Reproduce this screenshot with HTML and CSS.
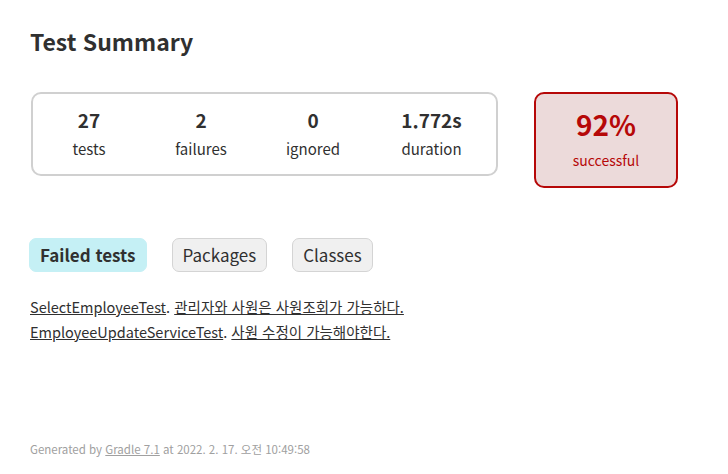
FILE: index.html
```html
<!DOCTYPE html>
<html lang="ko">

<head>
  <meta charset="UTF-8" />
  <title>Test results - Test Summary</title>
  <link rel="stylesheet" href="styles.css">
</head>

<body>
  <div id="content">
    <h1>Test Summary</h1>
    <div class="summary">
      <div class="summaryGroup">
        <div class="infoBox">
          <div class="counter">27</div>
          <p>tests</p>
        </div>
        <div class="infoBox">
          <div class="counter">2</div>
          <p>failures</p>
        </div>
        <div class="infoBox">
          <div class="counter">0</div>
          <p>ignored</p>
        </div>
        <div class="infoBox">
          <div class="counter">1.772s</div>
          <p>duration</p>
        </div>
      </div>
      <div id="successRate" class="infoBox failures">
        <div class="percent">92%</div>
        <p>successful</p>
      </div>
    </div>

    <ul class="tabLinks">
      <li class="selected"><a href="#">Failed tests</a></li>
      <li><a href="#">Packages</a></li>
      <li><a href="#">Classes</a></li>
    </ul>

    <ul class="linkList">
      <li><a href="#">SelectEmployeeTest</a>. <a href="#">관리자와 사원은 사원조회가 가능하다.</a></li>
      <li><a href="#">EmployeeUpdateServiceTest</a>. <a href="#">사원 수정이 가능해야한다.</a></li>
    </ul>

    <div id="footer">
      Generated by <a href="#">Gradle 7.1</a> at 2022. 2. 17. 오전 10:49:58
    </div>
  </div>
</body>

</html>
```

FILE: styles.css
```css
body {
  margin: 0;
  padding: 0;
  font-family: "Noto Sans CJK KR", "Noto Sans", sans-serif;
  font-size: 16px;
}

body, a, a:visited {
  color: #303030;
}

#content {
  padding: 20px 30px 20px 30px;
}

#content h1 {
  font-size: 23px;
  margin: 0 0 30px 0;
  line-height: 42px;
}

.summary {
  display: flex;
  align-items: flex-start;
}

.summaryGroup, #successRate {
  border: solid 2px #d0d0d0;
  border-radius: 10px;
}

.summaryGroup {
  display: flex;
  padding: 0 2px 0 0;
  margin-left: 1px;
}

.infoBox {
  width: 112px;
  padding: 13px 0 15px 0;
  text-align: center;
}

.infoBox p {
  margin: 0;
  font-size: 15px;
  line-height: 20px;
}

.counter, .percent {
  font-size: 19px;
  font-weight: bold;
  line-height: 26px;
  margin-bottom: 6px;
}

/* the duration column is a bit wider */
.summaryGroup .infoBox:last-child {
  width: 125px;
}

#successRate {
  width: 140px;
  margin-left: 36px;
  padding: 12px 0 16px 0;
}

#successRate .percent {
  font-size: 28px;
  line-height: 36px;
  margin-bottom: 8px;
}

#successRate p {
  font-size: 14px;
  margin: 0;
}

.failures, .failures a {
  color: #b60808;
}

#successRate.failures {
  background-color: #ecdada;
  border-color: #b60808;
}

ul.tabLinks {
  display: flex;
  list-style: none;
  padding: 0;
  margin: 50px 0 22px -1px;
}

ul.tabLinks li {
  padding: 4px 10px;
  margin-right: 25px;
  border: solid 1px #d4d4d4;
  border-radius: 7px;
  background-color: #f0f0f0;
  font-size: 17px;
  line-height: 24px;
}

ul.tabLinks li.selected {
  background-color: #c5f0f5;
  border-color: #c5f0f5;
  font-weight: bold;
}

ul.tabLinks a {
  text-decoration: none;
}

ul.linkList {
  list-style: none;
  padding: 0;
  margin: 0;
  font-size: 14.5px;
  line-height: 25px;
}

#footer {
  margin-top: 97px;
  font-size: 11.5px;
  white-space: nowrap;
}

#footer, #footer a {
  color: #a0a0a0;
}
```
